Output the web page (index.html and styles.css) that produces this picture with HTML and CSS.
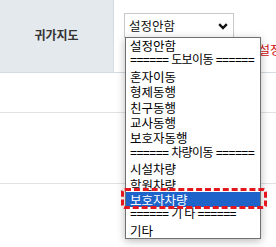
FILE: index.html
```html
<!DOCTYPE html>
<html lang="ko">
<head>
<meta charset="utf-8">
<link rel="stylesheet" href="styles.css">
</head>
<body>
<div class="table">
  <div class="row row-1">
    <div class="th">귀가지도</div>
    <div class="td">
      <div class="select">
        <span class="select-text">설정안함</span>
        <svg class="chev" width="10" height="7" viewBox="0 0 10 7"><path d="M1.2 1.2 L5 5 L8.8 1.2" fill="none" stroke="#111" stroke-width="2.4"/></svg>
      </div>
      <div class="note">미설정</div>
    </div>
  </div>
  <div class="row row-2"><div class="cell"></div></div>
  <div class="row row-3"><div class="cell"></div></div>
  <div class="row row-4"><div class="cell"></div></div>
</div>

<ul class="dropdown">
  <li>설정안함</li>
  <li class="sep">====== 도보이동 ======</li>
  <li>혼자이동</li>
  <li>형제동행</li>
  <li>친구동행</li>
  <li>교사동행</li>
  <li>보호자동행</li>
  <li class="sep">====== 차량이동 ======</li>
  <li>시설차량</li>
  <li>학원차량</li>
  <li class="active">보호자차량</li>
  <li class="sep">====== 기 타 ======</li>
  <li>기타</li>
</ul>
<div class="highlight-box"></div>
</body>
</html>
```

FILE: styles.css
```css
html, body {
  margin: 0;
  padding: 0;
  background: #fff;
}
body {
  width: 276px;
  height: 247px;
  overflow: hidden;
  position: relative;
  font-family: "Noto Sans CJK KR", "Noto Sans", sans-serif;
}
.table {
  display: flex;
  flex-direction: column;
}
.row {
  display: flex;
  border-bottom: 1px solid #e2e2e2;
}
.row-1 { height: 72px; border-bottom-color: #d3dce2; }
.row-2 { height: 39px; }
.row-3 { height: 70px; }
.row-4 { height: 60px; border-bottom: none; }
.th {
  width: 114px;
  flex: none;
  background: #e3e9ed;
  border-right: 1px solid #d3dce2;
  display: flex;
  align-items: center;
  justify-content: center;
  font-weight: bold;
  font-size: 12px;
  color: #333;
  padding-bottom: 4px;
  box-sizing: border-box;
}
.td {
  flex: 1;
  padding: 13px 0 0 10px;
  display: flex;
  flex-direction: column;
  min-width: 0;
}
.select {
  width: 110px;
  height: 25px;
  box-sizing: border-box;
  border: 1px solid #c8c8c8;
  display: flex;
  align-items: center;
  justify-content: space-between;
  padding: 0 5px 0 4px;
  font-size: 12.5px;
  color: #111;
}
.chev { margin-top: 1px; }
.note {
  margin-top: 4px;
  margin-left: 123px;
  font-size: 12.5px;
  line-height: 16px;
  color: #d01010;
  white-space: nowrap;
}
.dropdown {
  position: absolute;
  left: 125px;
  top: 37px;
  width: 134px;
  margin: 0;
  padding: 0;
  list-style: none;
  background: #fff;
  border: 1px solid #707070;
  box-shadow: 0 2px 8px rgba(0, 0, 0, 0.28);
  font-size: 12.5px;
  color: #000;
}
.dropdown li {
  height: 15.4px;
  line-height: 15.4px;
  padding-left: 4px;
  white-space: nowrap;
  overflow: hidden;
}
.dropdown li.sep {
  font-family: "Liberation Sans", "Noto Sans CJK KR", sans-serif;
  font-size: 12px;
  letter-spacing: -0.6px;
}
.dropdown li.active {
  background: #1d63c9;
  color: #fff;
}
.highlight-box {
  position: absolute;
  left: 121px;
  top: 188px;
  width: 146px;
  height: 21px;
  box-sizing: border-box;
  border: 3px dashed #e4161e;
  border-radius: 4px;
}
```
